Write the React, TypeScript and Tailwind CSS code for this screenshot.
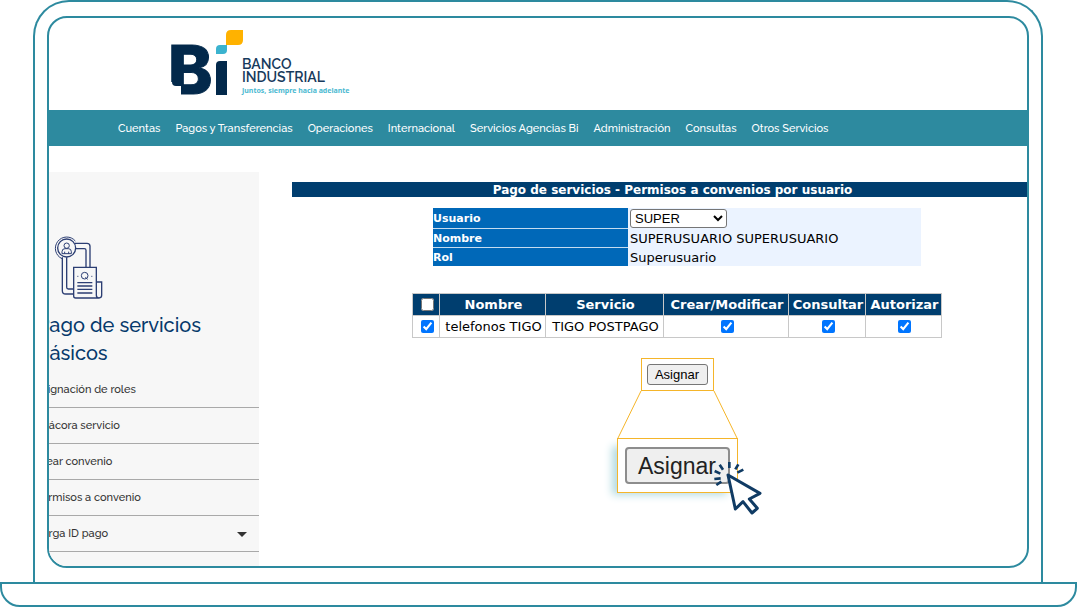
import React, { useState } from "react";

const navItems = [
  "Cuentas",
  "Pagos y Transferencias",
  "Operaciones",
  "Internacional",
  "Servicios Agencias Bi",
  "Administración",
  "Consultas",
  "Otros Servicios",
];

const sideItems = [
  { label: "Asignación de roles" },
  { label: "Bitácora servicio" },
  { label: "Crear convenio" },
  { label: "Permisos a convenio" },
  { label: "Carga ID pago", expandable: true },
];

const permissions = ["Crear/Modificar", "Consultar", "Autorizar"];

const Logo: React.FC = () => (
  <div className="flex items-end">
    <svg
      width="73"
      height="66"
      viewBox="0 0 73 66"
      className="overflow-visible"
      role="img"
      aria-label="Bi"
    >
      <text
        x="-3"
        y="64"
        fill="#03294b"
        stroke="#03294b"
        strokeWidth="1"
        fontFamily="Inter, sans-serif"
        fontWeight="800"
        fontSize="67"
      >
        B
      </text>
      <path d="M-1 52 h11 v14 H-1z" fill="#fff" />
      <path d="M1 50 h9 v6 H5 q-4 0 -4 -4z" fill="#03294b" />
      <path d="M45 35 q0 -4 4 -4 h7 v34 H45z" fill="#03294b" />
      <path d="M45 19 q0 -4 4 -4 h7 v5 q0 4 -4 4 h-7z" fill="#3bb3cf" />
      <path d="M55 5 q0 -5 5 -5 h12 v10 q0 5 -5 5 H55z" fill="#ffb200" />
    </svg>
    <div className="-ml-0.5 text-[#173a5c]">
      <p className="text-sm leading-[13px] font-semibold">
        BANCO
        <br />
        INDUSTRIAL
      </p>
      <p className="mt-0.5 font-['Noto_Sans',sans-serif] text-[7px] leading-[10px] font-bold text-[#4bb9d1]">
        Juntos, siempre hacia adelante
      </p>
    </div>
  </div>
);

const ServiceIcon: React.FC = () => (
  <svg
    width="50"
    height="64"
    viewBox="70 45 150 192"
    fill="none"
    stroke="#2c3e73"
    strokeWidth="4"
    aria-hidden="true"
  >
    <circle cx="111" cy="84" r="27" />
    <path d="M137 63 A34 34 0 1 0 97 116" strokeWidth="3" />
    <circle cx="111" cy="77" r="8" strokeWidth="3" />
    <path d="M97 101 v-6 q0 -9 9 -9 h10 q9 0 9 9 v6z M105 95 v6 M117 95 v6" strokeWidth="3" />
    <path d="M136 70 h36 q9 0 9 9 v62 M138 86 h26 q5 0 5 5 v50" />
    <path d="M98 112 v100 q0 10 10 10 h24 M111 112 v90 q0 5 5 5 h16" />
    <path d="M132 142 h68 v84 q0 8 8 8 h-70 q-6 0 -6 -6z" />
    <path d="M200 186 h16 v40 q0 8 -8 8" />
    <circle cx="165" cy="167" r="10" strokeWidth="3" />
    <path d="M167 172 l7 6 M143 169 h3 M185 169 h3" strokeWidth="3" />
    <path d="M143 188 h45 M143 198 h45 M143 208 h45 M143 219 h45" />
  </svg>
);

const ClickCursor: React.FC = () => (
  <svg
    width="50"
    height="55"
    viewBox="340 330 150 165"
    fill="none"
    stroke="#103b64"
    strokeWidth="8"
    className="absolute top-[21px] left-[95px]"
    aria-hidden="true"
  >
    <path
      d="M385 375 L481 430 L449 447 L473 475 L457 489 L430 455 L407 477z"
      fill="#fff"
      strokeWidth="9"
      strokeLinejoin="round"
    />
    <path d="M389 336 v18 M360 344 l10 15 M345 363 l17 8 M344 387 l19 -2 M350 405 l15 -10 M416 343 l-9 15 M431 359 l-18 9" />
  </svg>
);

const cellClass = "border border-[#c8c8c8] p-0 pl-0.5 text-center";

export default function App() {
  const [user, setUser] = useState("SUPER");
  const [selected, setSelected] = useState(true);

  return (
    <div className="bg-white font-['Raleway','Roboto',sans-serif]">
      {/* Laptop lid */}
      <div className="mr-[34px] ml-[33px] rounded-t-[36px] border-2 border-b-0 border-[#2d8a9f] px-3 py-3.5">
        <div className="overflow-hidden rounded-[20px] border-2 border-[#2d8a9f]">
          <header className="h-[92px] pt-3 pl-[122px]">
            <Logo />
          </header>

          <nav className="flex h-9 items-center gap-[15px] bg-[#2d8a9f] pt-0.5 pl-[69px] text-[11px] font-medium text-white">
            {navItems.map((item) => (
              <a key={item} href="#" className="whitespace-nowrap">
                {item}
              </a>
            ))}
          </nav>

          <div className="flex pt-[26px]">
            <aside className="w-[210px] shrink-0 bg-[#f7f7f7] pt-[63px] pb-3.5">
              <div className="ml-1">
                <ServiceIcon />
              </div>
              <h1 className="mt-3 -ml-3 text-xl leading-7 font-medium text-[#06396b]">
                Pago de servicios
                <br />
                básicos
              </h1>
              <ul className="mt-[5px] text-[11px] font-medium text-[#333]">
                {sideItems.map((item) => (
                  <li
                    key={item.label}
                    className="flex h-9 items-center justify-between border-b border-[#a9a9a9] pt-0.5 pr-3"
                  >
                    <a href="#" className="-ml-3.5">
                      {item.label}
                    </a>
                    {item.expandable && (
                      <svg width="10" height="5" viewBox="0 0 10 5" aria-hidden="true">
                        <path d="M0 0h10L5 5z" fill="#333" />
                      </svg>
                    )}
                  </li>
                ))}
              </ul>
            </aside>

            <main className="min-w-0 flex-1 pt-2.5 pl-[33px] font-['DejaVu_Sans',sans-serif] text-black">
              <h2 className="h-[15px] bg-[#003e6f] pl-[26px] text-center text-xs leading-4 font-bold text-white">
                Pago de servicios - Permisos a convenios por usuario
              </h2>

              <div className="flex flex-col items-center pl-[35px]">
                <table className="mt-[11px] w-[488px] text-[13px] leading-4">
                  <tbody>
                    <tr className="h-5 bg-[#ebf3ff]">
                      <th className="w-[195px] border-b border-[#c5dcf0] bg-[#0068b8] p-0 text-left align-middle text-[11px] text-white">
                        <label htmlFor="usuario" className="block pt-0.5">
                          Usuario
                        </label>
                      </th>
                      <td className="p-0 pl-0.5">
                        <select
                          id="usuario"
                          value={user}
                          onChange={(e) => setUser(e.target.value)}
                          className="block h-[19px] w-[97px] rounded-[3px] border border-[#767676] bg-white font-['Liberation_Sans',sans-serif] text-[13px]"
                        >
                          <option>SUPER</option>
                        </select>
                      </td>
                    </tr>
                    <tr className="h-[19px] bg-[#ebf3ff]">
                      <th className="border-b border-[#c5dcf0] bg-[#0068b8] p-0 pt-0.5 text-left align-middle text-[11px] text-white">
                        Nombre
                      </th>
                      <td className="p-0 pt-0.5 pl-0.5">SUPERUSUARIO SUPERUSUARIO</td>
                    </tr>
                    <tr className="h-[19px] bg-[#ebf3ff]">
                      <th className="bg-[#0068b8] p-0 pt-0.5 text-left align-middle text-[11px] text-white">
                        Rol
                      </th>
                      <td className="p-0 pt-0.5 pl-0.5">Superusuario</td>
                    </tr>
                  </tbody>
                </table>

                <table className="mt-[27px] w-[529px] table-fixed border-collapse text-[13px] leading-4 whitespace-nowrap">
                  <colgroup>
                    <col className="w-[27px]" />
                    <col className="w-[106px]" />
                    <col className="w-[118px]" />
                    <col className="w-[125px]" />
                    <col className="w-[77px]" />
                    <col className="w-[76px]" />
                  </colgroup>
                  <thead>
                    <tr className="h-[22px] bg-[#003e6f] text-white">
                      <th className={cellClass}>
                        <input
                          type="checkbox"
                          aria-label="Seleccionar todos"
                          className="mx-auto block size-[13px]"
                        />
                      </th>
                      <th className={cellClass}>Nombre</th>
                      <th className={cellClass}>Servicio</th>
                      {permissions.map((p) => (
                        <th key={p} className={cellClass}>
                          {p}
                        </th>
                      ))}
                    </tr>
                  </thead>
                  <tbody>
                    <tr className="h-[22px]">
                      <td className={cellClass}>
                        <input
                          type="checkbox"
                          aria-label="telefonos TIGO"
                          checked={selected}
                          onChange={(e) => setSelected(e.target.checked)}
                          className="mx-auto block size-[13px]"
                        />
                      </td>
                      <td className={cellClass}>telefonos TIGO</td>
                      <td className={cellClass}>TIGO POSTPAGO</td>
                      {permissions.map((p) => (
                        <td key={p} className={cellClass}>
                          <input
                            type="checkbox"
                            aria-label={p}
                            defaultChecked
                            className="mx-auto block size-[13px]"
                          />
                        </td>
                      ))}
                    </tr>
                  </tbody>
                </table>

                {/* Asignar button with its enlarged callout */}
                <div className="mt-5 flex flex-col items-center font-['Liberation_Sans',sans-serif]">
                  <div className="border border-[#f5b52a] p-[5px]">
                    <button className="block h-[21px] w-[61px] rounded-[3px] border border-[#767676] bg-[#efefef] text-[13px] leading-[19px]">
                      Asignar
                    </button>
                  </div>
                  <svg width="121" height="47" viewBox="0 0 121 47" aria-hidden="true">
                    <path d="M24 0 L1 47 M97 0 L120 47" stroke="#f5b52a" strokeWidth="1" />
                  </svg>
                  <div className="relative border border-[#f5b52a] bg-white px-[7px] py-2 shadow-[-8px_5px_8px_-3px_#b5dbe1]">
                    <button className="block h-[37px] w-[105px] rounded-[4px] border-2 border-[#8d8d8d] bg-[#efefef] text-[23px] leading-8 text-[#222]">
                      Asignar
                    </button>
                    <ClickCursor />
                  </div>
                </div>
              </div>
            </main>
          </div>
        </div>
      </div>

      {/* Laptop base */}
      <div className="h-[25px] rounded-b-[20px] border-2 border-[#2d8a9f]" />
    </div>
  );
}
